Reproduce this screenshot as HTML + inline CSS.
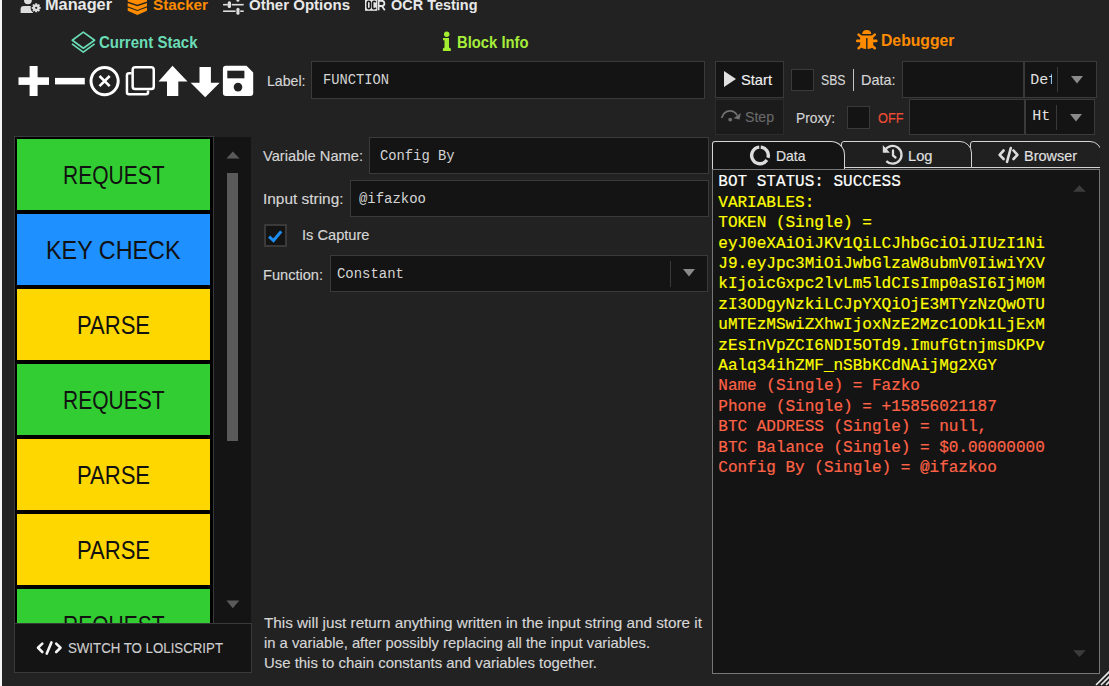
<!DOCTYPE html>
<html><head><meta charset="utf-8"><style>
html,body{margin:0;padding:0;width:1109px;height:686px;overflow:hidden;background:#222222;}
body{position:relative;font-family:'Liberation Sans', sans-serif;}
</style></head><body>
<div style="position:absolute;left:0px;top:0px;width:2px;height:686px;background:#f4f4f4"></div><svg style="position:absolute;left:16px;top:0px" width="30" height="16" viewBox="0 0 30 16">
<circle cx="11.9" cy="0.3" r="3.9" fill="#dddddd"/>
<path d="M4.6 13 L4.6 9.2 Q4.6 6 7.8 6 L14 6 Q16 6 17 7 L17 13 Z" fill="#dddddd"/>
<circle cx="20.2" cy="7.8" r="5.6" fill="#222"/>
<path d="M24.71 6.89 L24.71 8.71 L23.29 8.96 L23.21 9.16 L24.03 10.34 L22.74 11.63 L21.56 10.81 L21.36 10.89 L21.11 12.31 L19.29 12.31 L19.04 10.89 L18.84 10.81 L17.66 11.63 L16.37 10.34 L17.19 9.16 L17.11 8.96 L15.69 8.71 L15.69 6.89 L17.11 6.64 L17.19 6.44 L16.37 5.26 L17.66 3.97 L18.84 4.79 L19.04 4.71 L19.29 3.29 L21.11 3.29 L21.36 4.71 L21.56 4.79 L22.74 3.97 L24.03 5.26 L23.21 6.44 L23.29 6.64 Z" fill="#dddddd"/>
<circle cx="20.2" cy="7.8" r="1.1" fill="#222"/></svg><div id="t0" style="position:absolute;left:45px;top:-3.00px;font-family:'Liberation Sans', sans-serif;font-size:16px;line-height:16px;font-weight:bold;color:#e8e8e8;white-space:pre;transform:scaleX(1.0183);transform-origin:0 0;">Manager</div><svg style="position:absolute;left:127px;top:0px" width="21" height="16" viewBox="0 0 21 16">
<path d="M0.7 -1 L20 -1 L20 1.4 L10.3 4.8 L0.7 1.4 Z" fill="#ff8c00"/>
<path d="M0.7 3.1 L10.3 6.3 L20 3.1 L20 6.3 L10.3 9.9 L0.7 6.3 Z" fill="#ff8c00"/>
<path d="M0.7 7.6 L10.3 11 L20 7.6 L20 10.8 L10.3 14.9 L0.7 10.8 Z" fill="#ff8c00"/></svg><div id="t1" style="position:absolute;left:153px;top:-3.00px;font-family:'Liberation Sans', sans-serif;font-size:15px;line-height:15px;font-weight:bold;color:#ff8c00;white-space:pre;transform:scaleX(1.0144);transform-origin:0 0;">Stacker</div><svg style="position:absolute;left:223px;top:0px" width="21" height="16" viewBox="0 0 21 16"><g fill="#dddddd">
<rect x="0.1" y="3.9" width="4.7" height="1.6"/><rect x="8.7" y="3.9" width="12" height="1.6"/>
<rect x="4.7" y="1.2" width="3.3" height="6.9" rx="1.5"/>
<rect x="13.4" y="-5" width="3" height="6.8" rx="1.5"/>
<rect x="0.1" y="10.4" width="12.5" height="1.6"/><rect x="17.2" y="10.4" width="3.5" height="1.6"/>
<rect x="13.4" y="7.8" width="3.1" height="6.9" rx="1.5"/></g></svg><div id="t2" style="position:absolute;left:249px;top:-3.00px;font-family:'Liberation Sans', sans-serif;font-size:15px;line-height:15px;font-weight:bold;color:#e8e8e8;white-space:pre;transform:scaleX(1.0015);transform-origin:0 0;">Other Options</div><svg style="position:absolute;left:365px;top:0px" width="22" height="12" viewBox="0 0 22 12">
<rect x="0" y="-1" width="12.2" height="11.8" fill="#e6e6e6"/>
<rect x="2.2" y="1.2" width="3.2" height="7.6" rx="1.6" fill="none" stroke="#1a1a1a" stroke-width="1.6"/>
<path d="M10.8 2.2 Q10 1.2 9.2 1.2 Q7.6 1.2 7.6 3 L7.6 7 Q7.6 8.8 9.2 8.8 Q10 8.8 10.8 7.8" fill="none" stroke="#1a1a1a" stroke-width="1.6"/>
<path d="M13.6 10.2 L13.6 0.8 L16.8 0.8 Q19.4 0.8 19.4 3.5 Q19.4 6 16.8 6 L14 6 M16.8 6 L19.8 10.2" fill="none" stroke="#e6e6e6" stroke-width="1.8"/></svg><div id="t3" style="position:absolute;left:391px;top:-3.00px;font-family:'Liberation Sans', sans-serif;font-size:15px;line-height:15px;font-weight:bold;color:#e8e8e8;white-space:pre;transform:scaleX(0.9640);transform-origin:0 0;">OCR Testing</div><svg style="position:absolute;left:66px;top:28px" width="34" height="28" viewBox="0 0 34 28">
<path d="M17.3 4.1 L28.6 12.2 L17.3 20.2 L6.3 12.2 Z" fill="none" stroke="#68dcb4" stroke-width="1.7" stroke-linejoin="round"/>
<path d="M6 15.9 L17.3 24.1 L28.6 15.9" fill="none" stroke="#68dcb4" stroke-width="1.7" stroke-linejoin="round"/></svg><div id="t4" style="position:absolute;left:99px;top:34.00px;font-family:'Liberation Sans', sans-serif;font-size:16.4px;line-height:16.4px;font-weight:bold;color:#6adcb6;white-space:pre;transform:scaleX(0.9164);transform-origin:0 0;">Current Stack</div><svg style="position:absolute;left:438px;top:28px" width="20" height="26" viewBox="0 0 20 26">
<circle cx="8.7" cy="6.25" r="2.7" fill="#a4ee32"/>
<path d="M5 10 L11 10 L11 19.5 L12.8 20.5 L12.8 23 L4.9 23 L4.9 20.5 L6.5 19.5 L6.5 12.3 L5 12.3 Z" fill="#a4ee32"/></svg><div id="t5" style="position:absolute;left:457px;top:35.00px;font-family:'Liberation Sans', sans-serif;font-size:15.8px;line-height:15.8px;font-weight:bold;color:#a6ee3a;white-space:pre;transform:scaleX(0.9364);transform-origin:0 0;">Block Info</div><svg style="position:absolute;left:852px;top:26px" width="30" height="28" viewBox="0 0 30 28">
<path d="M10.2 7.9 Q10.4 3.9 14.7 3.9 Q19 3.9 19.2 7.9 Z" fill="#ff8c00"/>
<path d="M8.2 9.6 L21.2 9.6 L21.2 18.5 Q21.2 23 14.7 23 Q8.2 23 8.2 18.5 Z" fill="#ff8c00"/>
<g stroke="#ff8c00" stroke-width="2.6" stroke-linecap="round">
<line x1="6.6" y1="8.6" x2="10" y2="11.6"/><line x1="22.8" y1="8.6" x2="19.4" y2="11.6"/>
<line x1="5.3" y1="14.9" x2="9" y2="14.9"/><line x1="24.3" y1="14.9" x2="20.4" y2="14.9"/>
<line x1="6.6" y1="22.2" x2="10" y2="19.2"/><line x1="22.8" y1="22.2" x2="19.4" y2="19.2"/></g>
<rect x="14.1" y="12" width="1.4" height="11.5" fill="#222"/></svg><div id="t6" style="position:absolute;left:881px;top:33.00px;font-family:'Liberation Sans', sans-serif;font-size:15.8px;line-height:15.8px;font-weight:bold;color:#ff8c00;white-space:pre;transform:scaleX(0.9968);transform-origin:0 0;">Debugger</div><svg style="position:absolute;left:18px;top:65px" width="32" height="32" viewBox="0 0 32 32">
<rect x="0.5" y="12.3" width="30.5" height="7.6" fill="#ffffff"/>
<rect x="11.6" y="1" width="8" height="30" fill="#ffffff"/></svg><svg style="position:absolute;left:55px;top:77px" width="30" height="8" viewBox="0 0 30 8"><rect x="0" y="0.9" width="29.8" height="6.5" fill="#ffffff"/></svg><svg style="position:absolute;left:89px;top:65px" width="32" height="32" viewBox="0 0 32 32">
<circle cx="15.6" cy="16.1" r="13.6" fill="none" stroke="#ffffff" stroke-width="3"/>
<path d="M10.5 11 L20.7 21.2 M20.7 11 L10.5 21.2" stroke="#ffffff" stroke-width="2.6"/></svg><svg style="position:absolute;left:124px;top:65px" width="32" height="32" viewBox="0 0 32 32">
<rect x="8.65" y="2.15" width="21.1" height="21.9" rx="2.6" fill="none" stroke="#ffffff" stroke-width="2.5"/>
<path d="M7.6 8.2 L5 8.2 Q2.95 8.2 2.95 10.2 L2.95 27.35 Q2.95 29.35 4.95 29.35 L22.05 29.35 Q24.05 29.35 24.05 27.35 L24.05 25.4" fill="none" stroke="#ffffff" stroke-width="2.5"/></svg><svg style="position:absolute;left:158px;top:65px" width="30" height="32" viewBox="0 0 30 32"><path d="M0.5 16.5 L14.5 0.7 L29.5 16.5 L20.3 16.5 L20.3 31 L9 31 L9 16.5 Z" fill="#ffffff"/></svg><svg style="position:absolute;left:190px;top:66px" width="30" height="32" viewBox="0 0 30 32"><path d="M9.5 1 L20.9 1 L20.9 16.7 L29.7 16.7 L15.2 31.2 L0.7 16.7 L9.5 16.7 Z" fill="#ffffff"/></svg><svg style="position:absolute;left:222px;top:65px" width="32" height="32" viewBox="0 0 32 32">
<path d="M3 0.7 L24.5 0.7 L31.2 7.4 L31.2 28 Q31.2 31 28.2 31 L3.9 31 Q0.9 31 0.9 28 L0.9 3.7 Q0.9 0.7 3.9 0.7 Z" fill="#ffffff"/>
<rect x="5.3" y="5.7" width="17.1" height="7.6" fill="#222"/>
<circle cx="16" cy="22.1" r="4.3" fill="#222"/></svg><div style="position:absolute;left:14px;top:136px;width:200px;height:487px;background:#000;box-shadow:inset 0 0 0 1px #3a3a3a"></div><div style="position:absolute;left:15px;top:137px;width:198px;height:486px;background:#000"></div><div style="position:absolute;left:17px;top:139px;width:193px;height:71px;background:#32cd32"></div><div style="position:absolute;left:17px;top:214px;width:193px;height:71px;background:#1e90ff"></div><div style="position:absolute;left:17px;top:289px;width:193px;height:71px;background:#ffd700"></div><div style="position:absolute;left:17px;top:364px;width:193px;height:71px;background:#32cd32"></div><div style="position:absolute;left:17px;top:439px;width:193px;height:71px;background:#ffd700"></div><div style="position:absolute;left:17px;top:514px;width:193px;height:71px;background:#ffd700"></div><div style="position:absolute;left:17px;top:589px;width:193px;height:34px;background:#32cd32"></div><div id="t7" style="position:absolute;left:62.95px;top:163.00px;font-family:'Liberation Sans', sans-serif;font-size:25px;line-height:25px;font-weight:normal;color:#111111;white-space:pre;transform:scaleX(0.8398);transform-origin:0 0;">REQUEST</div><div id="t8" style="position:absolute;left:46.45px;top:238.00px;font-family:'Liberation Sans', sans-serif;font-size:25px;line-height:25px;font-weight:normal;color:#111111;white-space:pre;transform:scaleX(0.9338);transform-origin:0 0;">KEY CHECK</div><div id="t9" style="position:absolute;left:77.2px;top:313.00px;font-family:'Liberation Sans', sans-serif;font-size:25px;line-height:25px;font-weight:normal;color:#111111;white-space:pre;transform:scaleX(0.8805);transform-origin:0 0;">PARSE</div><div id="t10" style="position:absolute;left:62.95px;top:388.00px;font-family:'Liberation Sans', sans-serif;font-size:25px;line-height:25px;font-weight:normal;color:#111111;white-space:pre;transform:scaleX(0.8398);transform-origin:0 0;">REQUEST</div><div id="t11" style="position:absolute;left:77.2px;top:463.00px;font-family:'Liberation Sans', sans-serif;font-size:25px;line-height:25px;font-weight:normal;color:#111111;white-space:pre;transform:scaleX(0.8805);transform-origin:0 0;">PARSE</div><div id="t12" style="position:absolute;left:77.2px;top:538.00px;font-family:'Liberation Sans', sans-serif;font-size:25px;line-height:25px;font-weight:normal;color:#111111;white-space:pre;transform:scaleX(0.8805);transform-origin:0 0;">PARSE</div><div id="t13" style="position:absolute;left:62.95px;top:613.00px;font-family:'Liberation Sans', sans-serif;font-size:25px;line-height:25px;font-weight:normal;color:#111111;white-space:pre;transform:scaleX(0.8398);transform-origin:0 0;">REQUEST</div><div style="position:absolute;left:214px;top:136.5px;width:37px;height:487px;background:#141414"></div><svg style="position:absolute;left:226px;top:151px" width="14" height="8" viewBox="0 0 14 8"><path d="M0.4 7.4 L6.8 0.4 L13.6 7.4 Z" fill="#5a5a5a"/></svg><div style="position:absolute;left:227.3px;top:173.3px;width:10.5px;height:267.5px;background:#5a5a5a"></div><svg style="position:absolute;left:226px;top:600px" width="14" height="9" viewBox="0 0 14 9"><path d="M0.4 0.6 L13.3 0.6 L6.8 8.2 Z" fill="#5a5a5a"/></svg><div style="position:absolute;left:14px;top:623px;width:238px;height:50px;background:#141414;box-sizing:border-box;border:1px solid #3a3a3a"></div><svg style="position:absolute;left:36px;top:641px" width="27" height="16" viewBox="0 0 27 16"><g fill="none" stroke="#f4f4f4" stroke-width="2.6" stroke-linecap="round" stroke-linejoin="round">
<path d="M6.3 2.6 L2 6.8 L6.3 11"/><path d="M20.2 2.6 L24.5 6.8 L20.2 11"/><path d="M15.4 1.4 L10.8 12.6"/></g></svg><div id="t14" style="position:absolute;left:68px;top:640.00px;font-family:'Liberation Sans', sans-serif;font-size:15px;line-height:15px;font-weight:normal;color:#cfcfcf;white-space:pre;transform:scaleX(0.8841);transform-origin:0 0;-webkit-text-stroke:0.15px #cfcfcf;">SWITCH TO LOLISCRIPT</div><div id="t15" style="position:absolute;left:267px;top:73.00px;font-family:'Liberation Sans', sans-serif;font-size:15px;line-height:15px;font-weight:normal;color:#d6d6d6;white-space:pre;transform:scaleX(0.9419);transform-origin:0 0;-webkit-text-stroke:0.15px #d6d6d6;">Label:</div><div style="position:absolute;left:311px;top:61px;width:394px;height:37.5px;background:#141414;box-sizing:border-box;border:1.5px solid #3a3a3a"></div><div id="t16" style="position:absolute;left:323px;top:73.00px;font-family:'Liberation Mono', monospace;font-size:14.5px;line-height:14.5px;font-weight:normal;color:#d4d4d4;white-space:pre;transform:scaleX(0.9479);transform-origin:0 0;">FUNCTION</div><div id="t17" style="position:absolute;left:263px;top:148.00px;font-family:'Liberation Sans', sans-serif;font-size:15px;line-height:15px;font-weight:normal;color:#d6d6d6;white-space:pre;transform:scaleX(0.9777);transform-origin:0 0;-webkit-text-stroke:0.15px #d6d6d6;">Variable Name:</div><div style="position:absolute;left:368.5px;top:136.5px;width:340px;height:37px;background:#141414;box-sizing:border-box;border:1.5px solid #3a3a3a"></div><div id="t18" style="position:absolute;left:380px;top:149.00px;font-family:'Liberation Mono', monospace;font-size:14.5px;line-height:14.5px;font-weight:normal;color:#d4d4d4;white-space:pre;transform:scaleX(0.9511);transform-origin:0 0;">Config By</div><div id="t19" style="position:absolute;left:263px;top:191.00px;font-family:'Liberation Sans', sans-serif;font-size:15px;line-height:15px;font-weight:normal;color:#d6d6d6;white-space:pre;transform:scaleX(1.0269);transform-origin:0 0;-webkit-text-stroke:0.15px #d6d6d6;">Input string:</div><div style="position:absolute;left:349.5px;top:179.5px;width:359px;height:37.5px;background:#141414;box-sizing:border-box;border:1.5px solid #3a3a3a"></div><div id="t20" style="position:absolute;left:359.3px;top:192.00px;font-family:'Liberation Mono', monospace;font-size:14.5px;line-height:14.5px;font-weight:normal;color:#d4d4d4;white-space:pre;transform:scaleX(0.9623);transform-origin:0 0;">@ifazkoo</div><div style="position:absolute;left:264.2px;top:224.4px;width:22.8px;height:22.9px;background:#141414;box-sizing:border-box;border:2px solid #3a3a3a"></div><svg style="position:absolute;left:264px;top:225px" width="23" height="23" viewBox="0 0 23 23"><path d="M5.1 11.6 L9.5 15.5 L17.2 6.4" fill="none" stroke="#1e8ef5" stroke-width="3"/></svg><div id="t21" style="position:absolute;left:301.5px;top:227.00px;font-family:'Liberation Sans', sans-serif;font-size:15px;line-height:15px;font-weight:normal;color:#d6d6d6;white-space:pre;transform:scaleX(0.9754);transform-origin:0 0;-webkit-text-stroke:0.15px #d6d6d6;">Is Capture</div><div id="t22" style="position:absolute;left:263.3px;top:267.00px;font-family:'Liberation Sans', sans-serif;font-size:15px;line-height:15px;font-weight:normal;color:#d6d6d6;white-space:pre;transform:scaleX(0.9724);transform-origin:0 0;-webkit-text-stroke:0.15px #d6d6d6;">Function:</div><div style="position:absolute;left:329.8px;top:254.7px;width:378.5px;height:37.5px;background:#141414;box-sizing:border-box;border:1.5px solid #3a3a3a"></div><div style="position:absolute;left:670px;top:261px;width:1px;height:25.5px;background:#3a3a3a"></div><svg style="position:absolute;left:683.3px;top:269.2px" width="12" height="8" viewBox="0 0 12 8"><path d="M0 0 L12 0 L6 7.6 Z" fill="#8a8a8a"/></svg><div id="t23" style="position:absolute;left:337.2px;top:267.00px;font-family:'Liberation Mono', monospace;font-size:14.5px;line-height:14.5px;font-weight:normal;color:#d4d4d4;white-space:pre;transform:scaleX(0.9623);transform-origin:0 0;">Constant</div><div id="t24" style="position:absolute;left:264px;top:615.00px;font-family:'Liberation Sans', sans-serif;font-size:15px;line-height:15px;font-weight:normal;color:#d6d6d6;white-space:pre;transform:scaleX(1.0181);transform-origin:0 0;-webkit-text-stroke:0.15px #d6d6d6;">This will just return anything written in the input string and store it</div><div id="t25" style="position:absolute;left:264px;top:635.00px;font-family:'Liberation Sans', sans-serif;font-size:15px;line-height:15px;font-weight:normal;color:#d6d6d6;white-space:pre;transform:scaleX(0.9850);transform-origin:0 0;-webkit-text-stroke:0.15px #d6d6d6;">in a variable, after possibly replacing all the input variables.</div><div id="t26" style="position:absolute;left:264px;top:655.00px;font-family:'Liberation Sans', sans-serif;font-size:15px;line-height:15px;font-weight:normal;color:#d6d6d6;white-space:pre;transform:scaleX(0.9934);transform-origin:0 0;-webkit-text-stroke:0.15px #d6d6d6;">Use this to chain constants and variables together.</div><div style="position:absolute;left:715px;top:61px;width:69px;height:36.5px;background:#141414;box-sizing:border-box;border:1.5px solid #3a3a3a"></div><svg style="position:absolute;left:723px;top:70px" width="14" height="18" viewBox="0 0 14 18"><path d="M1 1 L13 9 L1 17 Z" fill="#e0e0e0"/></svg><div id="t27" style="position:absolute;left:740.5px;top:72.00px;font-family:'Liberation Sans', sans-serif;font-size:15px;line-height:15px;font-weight:normal;color:#f0f0f0;white-space:pre;transform:scaleX(0.9783);transform-origin:0 0;-webkit-text-stroke:0.15px #f0f0f0;">Start</div><div style="position:absolute;left:715px;top:99px;width:69px;height:35.5px;background:#1b1b1b;box-sizing:border-box;border:1.5px solid #2c2c2c"></div><svg style="position:absolute;left:720px;top:108px" width="22" height="15" viewBox="0 0 22 15"><path d="M1.6 10 Q3.8 2.8 10 2.8 Q14.6 2.8 17.2 7.4" fill="none" stroke="#707070" stroke-width="1.7"/>
<path d="M13.6 10.3 L20.9 5 L19.5 11.6 Z" fill="#707070"/><circle cx="10.2" cy="11.6" r="1.9" fill="#707070"/></svg><div id="t28" style="position:absolute;left:745px;top:109.00px;font-family:'Liberation Sans', sans-serif;font-size:15px;line-height:15px;font-weight:normal;color:#6a6a6a;white-space:pre;transform:scaleX(0.9397);transform-origin:0 0;-webkit-text-stroke:0.15px #6a6a6a;">Step</div><div style="position:absolute;left:791px;top:68.5px;width:23px;height:22.5px;background:#141414;box-sizing:border-box;border:1.5px solid #3a3a3a"></div><div id="t29" style="position:absolute;left:821.3px;top:72.00px;font-family:'Liberation Sans', sans-serif;font-size:15px;line-height:15px;font-weight:normal;color:#d6d6d6;white-space:pre;transform:scaleX(0.8162);transform-origin:0 0;-webkit-text-stroke:0.15px #d6d6d6;">SBS</div><div style="position:absolute;left:853px;top:68.5px;width:1.2px;height:22.5px;background:#c4c4c4"></div><div id="t30" style="position:absolute;left:861px;top:72.00px;font-family:'Liberation Sans', sans-serif;font-size:15px;line-height:15px;font-weight:normal;color:#d6d6d6;white-space:pre;transform:scaleX(0.9621);transform-origin:0 0;-webkit-text-stroke:0.15px #d6d6d6;">Data:</div><div style="position:absolute;left:901.5px;top:61.3px;width:122px;height:37px;background:#141414;box-sizing:border-box;border:1.5px solid #3a3a3a"></div><div style="position:absolute;left:1023.5px;top:61.3px;width:73px;height:37px;background:#141414;box-sizing:border-box;border:1.5px solid #3a3a3a"></div><div style="position:absolute;left:1024px;top:62px;width:27.5px;height:34px;overflow:hidden"><div style="position:absolute;left:6.3px;top:9px;font-family:'Liberation Mono',monospace;font-size:15px;line-height:20px;color:#e0e0e0;white-space:pre">Def</div></div><div style="position:absolute;left:1057px;top:67px;width:1px;height:24.5px;background:#3a3a3a"></div><svg style="position:absolute;left:1071px;top:76.3px" width="12" height="8" viewBox="0 0 12 8"><path d="M0 0 L12 0 L6 7.6 Z" fill="#8a8a8a"/></svg><div id="t31" style="position:absolute;left:795.7px;top:110.00px;font-family:'Liberation Sans', sans-serif;font-size:15px;line-height:15px;font-weight:normal;color:#d6d6d6;white-space:pre;transform:scaleX(0.9173);transform-origin:0 0;-webkit-text-stroke:0.15px #d6d6d6;">Proxy:</div><div style="position:absolute;left:847px;top:106px;width:23px;height:22.5px;background:#141414;box-sizing:border-box;border:1.5px solid #3a3a3a"></div><div id="t32" style="position:absolute;left:877.7px;top:110.00px;font-family:'Liberation Sans', sans-serif;font-size:15px;line-height:15px;font-weight:normal;color:#ee4b35;white-space:pre;transform:scaleX(0.8500);transform-origin:0 0;-webkit-text-stroke:0.15px #ee4b35;">OFF</div><div style="position:absolute;left:909.4px;top:99.4px;width:115.5px;height:35.6px;background:#141414;box-sizing:border-box;border:1.5px solid #3a3a3a"></div><div style="position:absolute;left:1025px;top:99.4px;width:69.5px;height:35.6px;background:#141414;box-sizing:border-box;border:1.5px solid #3a3a3a"></div><div style="position:absolute;left:1056px;top:104.5px;width:1px;height:25px;background:#3a3a3a"></div><div style="position:absolute;left:1026px;top:100px;width:27.5px;height:34px;overflow:hidden"><div style="position:absolute;left:6.3px;top:7px;font-family:'Liberation Mono',monospace;font-size:15px;line-height:20px;color:#e0e0e0;white-space:pre">Ht</div></div><svg style="position:absolute;left:1070px;top:113.6px" width="12" height="8" viewBox="0 0 12 8"><path d="M0 0 L12 0 L6 7.6 Z" fill="#8a8a8a"/></svg><div style="position:absolute;left:711.5px;top:140.7px;width:388.5px;height:30px;overflow:hidden"><div style="position:absolute;left:258.5px;top:0;width:132px;height:27px;box-sizing:border-box;background:#202020;border:1.3px solid #d4d4d4;border-radius:3px 12px 0 0"></div><div style="position:absolute;left:129px;top:0;width:131px;height:27px;box-sizing:border-box;background:#1f1f1f;border:1.3px solid #d4d4d4;border-radius:3px 12px 0 0"></div></div><div style="position:absolute;left:711.5px;top:169px;width:388.5px;height:505px;background:#141414;box-sizing:border-box;border:1.5px solid #777777"></div><div style="position:absolute;left:711.5px;top:140.7px;width:133.5px;height:28px;box-sizing:border-box;background:#141414;border:1.3px solid #d4d4d4;border-bottom:none;border-radius:3px 14px 0 0"></div><svg style="position:absolute;left:749px;top:144px" width="23" height="23" viewBox="0 0 23 23"><path d="M11.72 3.13 A8.3 8.3 0 0 1 18.94 13.83" fill="none" stroke="#dcdcdc" stroke-width="3.4"/>
<path d="M17.88 16.04 A8.3 8.3 0 1 1 10.28 3.13" fill="none" stroke="#dcdcdc" stroke-width="3.4"/></svg><div id="t33" style="position:absolute;left:776px;top:148.00px;font-family:'Liberation Sans', sans-serif;font-size:15px;line-height:15px;font-weight:normal;color:#e0e0e0;white-space:pre;transform:scaleX(0.9310);transform-origin:0 0;-webkit-text-stroke:0.15px #e0e0e0;">Data</div><svg style="position:absolute;left:881px;top:140px" width="24" height="27" viewBox="0 0 24 27"><path d="M3.89 10.35 A8.9 8.9 0 1 1 5.31 21.09" fill="none" stroke="#dcdcdc" stroke-width="2.3"/>
<path d="M1.8 5.1 L1.8 12.7 L8.9 12.7 Z" fill="#dcdcdc"/>
<path d="M12 10.5 L12 15.5 L14.5 17.5" fill="none" stroke="#dcdcdc" stroke-width="2.3" stroke-linecap="round"/></svg><div id="t34" style="position:absolute;left:908px;top:148.00px;font-family:'Liberation Sans', sans-serif;font-size:15px;line-height:15px;font-weight:normal;color:#e0e0e0;white-space:pre;transform:scaleX(0.9788);transform-origin:0 0;-webkit-text-stroke:0.15px #e0e0e0;">Log</div><svg style="position:absolute;left:997px;top:145px" width="23" height="19" viewBox="0 0 23 19"><g fill="none" stroke="#dcdcdc" stroke-width="2.6" stroke-linecap="round" stroke-linejoin="round">
<path d="M6.6 5.5 L2.6 9.8 L6.6 14"/><path d="M16.5 5.5 L20.4 9.8 L16.5 14"/><path d="M13.8 3 L10 16.8"/></g></svg><div id="t35" style="position:absolute;left:1023.7px;top:148.00px;font-family:'Liberation Sans', sans-serif;font-size:15px;line-height:15px;font-weight:normal;color:#e0e0e0;white-space:pre;transform:scaleX(0.9634);transform-origin:0 0;-webkit-text-stroke:0.15px #e0e0e0;">Browser</div><div id="t36" style="position:absolute;left:718.3px;top:174.00px;font-family:'Liberation Mono', monospace;font-size:16px;line-height:16px;font-weight:normal;color:#ffffff;white-space:pre;-webkit-text-stroke:0.2px #ffffff;">BOT STATUS: SUCCESS</div><div id="t37" style="position:absolute;left:718.3px;top:195.00px;font-family:'Liberation Mono', monospace;font-size:16px;line-height:16px;font-weight:normal;color:#ffff00;white-space:pre;-webkit-text-stroke:0.2px #ffff00;">VARIABLES:</div><div id="t38" style="position:absolute;left:718.3px;top:215.00px;font-family:'Liberation Mono', monospace;font-size:16px;line-height:16px;font-weight:normal;color:#ffff00;white-space:pre;-webkit-text-stroke:0.2px #ffff00;">TOKEN (Single) =</div><div id="t39" style="position:absolute;left:718.3px;top:236.00px;font-family:'Liberation Mono', monospace;font-size:16px;line-height:16px;font-weight:normal;color:#ffff00;white-space:pre;-webkit-text-stroke:0.2px #ffff00;">eyJ0eXAiOiJKV1QiLCJhbGciOiJIUzI1Ni</div><div id="t40" style="position:absolute;left:718.3px;top:256.00px;font-family:'Liberation Mono', monospace;font-size:16px;line-height:16px;font-weight:normal;color:#ffff00;white-space:pre;-webkit-text-stroke:0.2px #ffff00;">J9.eyJpc3MiOiJwbGlzaW8ubmV0IiwiYXV</div><div id="t41" style="position:absolute;left:718.3px;top:276.00px;font-family:'Liberation Mono', monospace;font-size:16px;line-height:16px;font-weight:normal;color:#ffff00;white-space:pre;-webkit-text-stroke:0.2px #ffff00;">kIjoicGxpc2lvLm5ldCIsImp0aSI6IjM0M</div><div id="t42" style="position:absolute;left:718.3px;top:297.00px;font-family:'Liberation Mono', monospace;font-size:16px;line-height:16px;font-weight:normal;color:#ffff00;white-space:pre;-webkit-text-stroke:0.2px #ffff00;">zI3ODgyNzkiLCJpYXQiOjE3MTYzNzQwOTU</div><div id="t43" style="position:absolute;left:718.3px;top:317.00px;font-family:'Liberation Mono', monospace;font-size:16px;line-height:16px;font-weight:normal;color:#ffff00;white-space:pre;-webkit-text-stroke:0.2px #ffff00;">uMTEzMSwiZXhwIjoxNzE2Mzc1ODk1LjExM</div><div id="t44" style="position:absolute;left:718.3px;top:338.00px;font-family:'Liberation Mono', monospace;font-size:16px;line-height:16px;font-weight:normal;color:#ffff00;white-space:pre;-webkit-text-stroke:0.2px #ffff00;">zEsInVpZCI6NDI5OTd9.ImufGtnjmsDKPv</div><div id="t45" style="position:absolute;left:718.3px;top:358.00px;font-family:'Liberation Mono', monospace;font-size:16px;line-height:16px;font-weight:normal;color:#ffff00;white-space:pre;-webkit-text-stroke:0.2px #ffff00;">Aalq34ihZMF_nSBbKCdNAijMg2XGY</div><div id="t46" style="position:absolute;left:718.3px;top:378.00px;font-family:'Liberation Mono', monospace;font-size:16px;line-height:16px;font-weight:normal;color:#ff6347;white-space:pre;-webkit-text-stroke:0.2px #ff6347;">Name (Single) = Fazko</div><div id="t47" style="position:absolute;left:718.3px;top:399.00px;font-family:'Liberation Mono', monospace;font-size:16px;line-height:16px;font-weight:normal;color:#ff6347;white-space:pre;-webkit-text-stroke:0.2px #ff6347;">Phone (Single) = +15856021187</div><div id="t48" style="position:absolute;left:718.3px;top:419.00px;font-family:'Liberation Mono', monospace;font-size:16px;line-height:16px;font-weight:normal;color:#ff6347;white-space:pre;-webkit-text-stroke:0.2px #ff6347;">BTC ADDRESS (Single) = null,</div><div id="t49" style="position:absolute;left:718.3px;top:440.00px;font-family:'Liberation Mono', monospace;font-size:16px;line-height:16px;font-weight:normal;color:#ff6347;white-space:pre;-webkit-text-stroke:0.2px #ff6347;">BTC Balance (Single) = $0.00000000</div><div id="t50" style="position:absolute;left:718.3px;top:460.00px;font-family:'Liberation Mono', monospace;font-size:16px;line-height:16px;font-weight:normal;color:#ff6347;white-space:pre;-webkit-text-stroke:0.2px #ff6347;">Config By (Single) = @ifazkoo</div><svg style="position:absolute;left:1073px;top:185px" width="13" height="7" viewBox="0 0 13 7"><path d="M0.2 6.8 L6.4 0.2 L12.8 6.8 Z" fill="#3c3c3c"/></svg><svg style="position:absolute;left:1073px;top:650px" width="13" height="7" viewBox="0 0 13 7"><path d="M0.2 0.2 L12.8 0.2 L6.4 6.9 Z" fill="#3c3c3c"/></svg><svg style="position:absolute;left:1094px;top:670px" width="15" height="16" viewBox="0 0 15 16"><g stroke="#e8e8e8" stroke-width="1.6">
<line x1="2" y1="15" x2="17" y2="0"/><line x1="7" y1="15" x2="17" y2="5"/><line x1="12" y1="15" x2="17" y2="10"/></g></svg>
</body></html>
